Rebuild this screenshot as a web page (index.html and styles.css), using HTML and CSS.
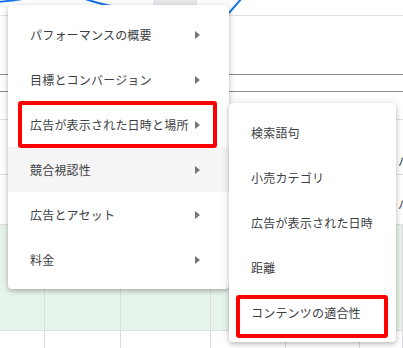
FILE: index.html
```html
<!DOCTYPE html>
<html>
<head>
    <meta charset="utf-8">
    <title>レポート メニュー</title>
    <link rel="stylesheet" href="styles.css">
</head>
<body>

    <div class="page">
        <!-- 背景のグラフと表 -->
        <div class="chart">
            <svg class="chart-line" width="403" height="16" viewBox="0 0 403 16">
                <path d="M-2,2 C8,1 18,0 28,-2" />
                <path d="M82,-2 C92,1 100,4 112,6 L229,13 L242,-2" />
            </svg>
            <div class="chart-tab"></div>
        </div>
        <div class="gap-a"></div>
        <div class="bar"></div>
        <div class="gap-b"></div>
        <div class="row row-head"><span class="peek">パ</span></div>
        <div class="row row-mid"><span class="peek">パ</span></div>
        <div class="cells green">
            <div></div><div></div><div></div><div></div><div></div><div></div>
        </div>
        <div class="cells">
            <div></div><div></div><div></div><div></div><div></div><div></div>
        </div>

        <!-- メインメニュー -->
        <div class="menu menu-main">
            <div class="item">パフォーマンスの概要<i class="arrow"></i></div>
            <div class="item">目標とコンバージョン<i class="arrow"></i></div>
            <div class="item">広告が表示された日時と場所<i class="arrow"></i></div>
            <div class="item hover">競合視認性<i class="arrow"></i></div>
            <div class="item">広告とアセット<i class="arrow"></i></div>
            <div class="item">料金<i class="arrow"></i></div>
        </div>

        <!-- サブメニュー -->
        <div class="menu menu-sub">
            <div class="item">検索語句</div>
            <div class="item">小売カテゴリ</div>
            <div class="item">広告が表示された日時</div>
            <div class="item">距離</div>
            <div class="item">コンテンツの適合性</div>
        </div>

        <!-- 赤枠 -->
        <div class="mark mark-1"></div>
        <div class="mark mark-2"></div>
    </div>

</body>
</html>
```

FILE: styles.css
```css
html, body {
    height: 100%;
}

body {
    margin: 0;
    background-color: #ffffff;
    font-family: "Noto Sans CJK JP", "Noto Sans", sans-serif;
    overflow: hidden;
}

.page {
    position: relative;
    width: 403px;
    height: 348px;
    overflow: hidden;
}

/* グラフ部分 */
.chart {
    position: relative;
    height: 15px;
    border-bottom: 1px solid #e0e0e0;
}
.chart-line {
    position: absolute;
    left: 0;
    top: 0;
}
.chart-line path {
    fill: none;
    stroke: #1a73e8;
    stroke-width: 2;
}
.chart-tab {
    position: absolute;
    left: 153px;
    top: 0;
    width: 44px;
    height: 5px;
    background-color: #e8eaed;
}

.gap-a {
    height: 58px;
}
.bar {
    height: 16px;
    border-top: 1px solid #8a8a8a;
    border-bottom: 1px solid #8a8a8a;
}
.gap-b {
    height: 27px;
    border-bottom: 1px solid #e0e0e0;
}
.row {
    display: flex;
    box-sizing: border-box;
    justify-content: flex-end;
    align-items: center;
    border-bottom: 1px solid #e0e0e0;
    font-size: 12px;
    color: #3c4043;
}
.row-head {
    height: 55px;
    padding-top: 26px;
}
.row-mid {
    height: 50px;
    padding-top: 8px;
}
.peek {
    margin-right: -7px;
}

.cells {
    display: grid;
    grid-template-columns: 45px 76px 90px 75px 74px 43px;
    height: 105px;
    border-bottom: 1px solid #e0e0e0;
}
.cells div {
    border-right: 1px solid #dadce0;
}
.cells.green {
    background-color: #e6f4ea;
}
.cells + .cells {
    height: 30px;
}

/* メニュー */
.menu {
    position: absolute;
    box-sizing: border-box;
    padding: 7px 0;
    background-color: #ffffff;
    border-radius: 4px;
    box-shadow: 0 2px 4px rgba(0,0,0,0.2), 0 1px 10px rgba(0,0,0,0.12);
    font-size: 12px;
    letter-spacing: 0.2px;
    color: #3c4043;
}
.menu-main {
    left: 8px;
    top: 5px;
    width: 221px;
}
.menu-sub {
    left: 229px;
    top: 103px;
    width: 167px;
}
.item {
    display: flex;
    justify-content: space-between;
    align-items: center;
    height: 45px;
    padding: 0 29px 0 22px;
    white-space: nowrap;
}
.item.hover {
    background-color: #f4f5f4;
}
.arrow {
    width: 0;
    height: 0;
    border-left: 5px solid #757575;
    border-top: 4px solid transparent;
    border-bottom: 4px solid transparent;
}

/* 赤枠 */
.mark {
    position: absolute;
    box-sizing: border-box;
    border: 4px solid #ff0000;
    border-radius: 3px;
}
.mark-1 {
    left: 18px;
    top: 101px;
    width: 199px;
    height: 47px;
}
.mark-2 {
    left: 236px;
    top: 295px;
    width: 152px;
    height: 43px;
}
```
